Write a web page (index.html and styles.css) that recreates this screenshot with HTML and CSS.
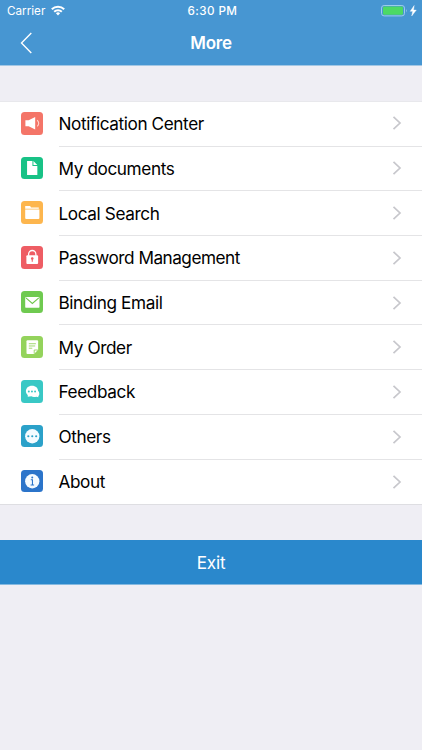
FILE: index.html
```html
<!DOCTYPE html>
<html lang="en">
<head>
<meta charset="utf-8">
<title>More</title>
<link rel="stylesheet" href="styles.css">
</head>
<body>
<header class="header">
  <div class="status">
    <div class="carrier"><span>Carrier</span>
      <svg width="14" height="11" viewBox="0 0 14 11" fill="none" stroke="#fff" stroke-width="2"><path d="M.8 4.2a8.8 8.8 0 0 1 12.4 0M3.2 6.8a5.4 5.4 0 0 1 7.6 0"/><path d="M4.9 8.3a3 3 0 0 1 4.2 0L7 10.5z" fill="#fff" stroke="none"/></svg>
    </div>
    <span class="time">6:30 PM</span>
    <div class="power">
      <svg width="36" height="12" viewBox="0 0 36 12"><rect x=".5" y=".5" width="23" height="10.4" rx="2.6" fill="none" stroke="#9dccec"/><rect x="2" y="1.6" width="20" height="8.2" rx="1.3" fill="#4cd964"/><path d="M25 4q1.5 1.6 0 3.4z" fill="#9dccec"/><path d="M33.2.5l-4 5.8h2.5l-1 4.7 4.6-5.9h-2.8z" fill="#fff" stroke="#fff" stroke-width=".4"/></svg>
    </div>
  </div>
  <div class="nav">
    <svg class="back" width="14" height="24" viewBox="0 0 14 24" fill="none" stroke="#fff" stroke-width="1.4"><path d="M11.3 2L1.5 12l9.8 10"/></svg>
    <h1 class="title">More</h1>
  </div>
</header>
<main>
  <ul class="list">
    <li class="row"><svg class="icon coral" viewBox="0 0 23 23"><path d="M4.5 8.5h3.3L14.5 5v13l-6.7-3.5H4.5z" fill="#fff"/><path d="M16.5 8.2q3.2 3.3 0 6.6" fill="none" stroke="#ffd5cf" stroke-width="1.1"/></svg><div class="cell"><span class="label">Notification Center</span><svg class="chevron" viewBox="0 0 10 16"><path d="M1.5 1.8L8 8l-6.5 6.2"/></svg></div></li>
    <li class="row"><svg class="icon emerald" viewBox="0 0 23 23"><path d="M6.2 4.2h5.5v5h5v9.3H6.2zM12.7 4.2l4 4h-4z" fill="#fff"/></svg><div class="cell"><span class="label">My documents</span><svg class="chevron" viewBox="0 0 10 16"><path d="M1.5 1.8L8 8l-6.5 6.2"/></svg></div></li>
    <li class="row"><svg class="icon amber" viewBox="0 0 23 23"><path d="M4.3 5.2h5l1 1.4h7.9v1.3H4.3zM4.3 8.7h14.5v8.7a1 1 0 0 1-1 1H5.3a1 1 0 0 1-1-1z" fill="#fff"/></svg><div class="cell"><span class="label">Local Search</span><svg class="chevron" viewBox="0 0 10 16"><path d="M1.5 1.8L8 8l-6.5 6.2"/></svg></div></li>
    <li class="row"><svg class="icon red" viewBox="0 0 23 23"><path d="M7.8 10V8.3a3.7 3.7 0 0 1 7.4 0V10" fill="none" stroke="#fff" stroke-width="1.3"/><rect x="5.5" y="9.5" width="12" height="9" rx="1" fill="#fff"/><path d="M11.5 12v4" stroke="#ee5d64" stroke-width="1.1"/><circle cx="11.5" cy="12.7" r="1.3" fill="#ee5d64"/></svg><div class="cell"><span class="label long">Password Management</span><svg class="chevron" viewBox="0 0 10 16"><path d="M1.5 1.8L8 8l-6.5 6.2"/></svg></div></li>
    <li class="row"><svg class="icon green" viewBox="0 0 23 23"><rect x="4.3" y="6.2" width="14.6" height="11" rx="1.2" fill="#fff"/><path d="M5 7l6.6 5.8L18.2 7" fill="none" stroke="#6fc64c" stroke-width="1.1"/></svg><div class="cell"><span class="label">Binding Email</span><svg class="chevron" viewBox="0 0 10 16"><path d="M1.5 1.8L8 8l-6.5 6.2"/></svg></div></li>
    <li class="row"><svg class="icon lime" viewBox="0 0 23 23"><path d="M6.6 4.300h9.900q1 0 1 1v8.700l-4.200 4.500H6.600q-1 0-1-1V5.300q0-1 1-1z" fill="#fff"/><path d="M8 7.900h7.200M8 10.200h6.500M8 12.500h3.500M13.500 18v-3.700h3.700" fill="none" stroke="#94d35c" stroke-width=".9"/></svg><div class="cell"><span class="label">My Order</span><svg class="chevron" viewBox="0 0 10 16"><path d="M1.5 1.8L8 8l-6.5 6.2"/></svg></div></li>
    <li class="row"><svg class="icon turquoise" viewBox="0 0 23 23"><path d="M11.2 5.8c4 0 6.2 2.5 6.2 5.2q1.3.9 1.3 3c0 1.2-.5 2-1 2.5v1.2l-2-.7c-2 .6-4 .5-5-.3l-3.8.5v-1.8C5.7 14.2 5 13 5 11.5c0-3.2 2.500-5.700 6.200-5.700z" fill="#fff"/><g fill="#39c8c5"><circle cx="8" cy="11.7" r="1"/><circle cx="11.2" cy="11.7" r="1"/><circle cx="14.4" cy="11.7" r="1"/></g></svg><div class="cell"><span class="label">Feedback</span><svg class="chevron" viewBox="0 0 10 16"><path d="M1.5 1.8L8 8l-6.5 6.2"/></svg></div></li>
    <li class="row"><svg class="icon teal" viewBox="0 0 23 23"><circle cx="11.5" cy="11.5" r="7.3" fill="#f4fbff"/><g fill="#2ba1c9"><circle cx="7.5" cy="11.5" r="1.1"/><circle cx="11.5" cy="11.5" r="1.1"/><circle cx="15.5" cy="11.5" r="1.1"/></g></svg><div class="cell"><span class="label">Others</span><svg class="chevron" viewBox="0 0 10 16"><path d="M1.5 1.8L8 8l-6.5 6.2"/></svg></div></li>
    <li class="row"><svg class="icon blue" viewBox="0 0 23 23"><circle cx="11.5" cy="11.5" r="7.3" fill="#f4faff"/><circle cx="11.5" cy="7.7" r="1" fill="#2b74ca"/><path d="M10 10h1.7v5.3M9.8 15.3h3.6" fill="none" stroke="#2b74ca" stroke-width="1.1"/></svg><div class="cell"><span class="label">About</span><svg class="chevron" viewBox="0 0 10 16"><path d="M1.5 1.8L8 8l-6.5 6.2"/></svg></div></li>
  </ul>
  <button class="exit">Exit</button>
</main>
</body>
</html>
```
FILE: styles.css
```css
* { box-sizing: border-box; }
body {
  margin: 0;
  min-height: 750px;
  background: #efeef4;
  color: #000;
  font-family: Inter, "Liberation Sans", sans-serif;
}
.header {
  height: 66px;
  background: #4796d2;
  border-bottom: 1px solid #a3c7e4;
  color: #fff;
}
.status {
  display: grid;
  grid-template-columns: 1fr auto 1fr;
  align-items: center;
  height: 21px;
  padding: 0 5px 0 7px;
  font-size: 11.7px;
}
.carrier { display: flex; align-items: center; gap: 6px; }
.time { font-weight: 500; letter-spacing: .4px; margin-left: 1px; }
.power { display: flex; justify-content: flex-end; }
.nav {
  display: grid;
  grid-template-columns: 1fr auto 1fr;
  align-items: center;
  height: 43px;
}
.back { margin-left: 20px; }
.title { margin: 0; font-size: 17px; font-weight: 600; letter-spacing: -.2px; }
.list {
  margin: 35px 0 0;
  padding: 0;
  list-style: none;
  background: #fff;
  border-top: 1px solid #e8e8ec;
  border-bottom: 1px solid #dedee2;
}
.row { display: flex; align-items: center; height: 44.7px; padding-left: 20.5px; }
.row:last-child { height: 44.4px; }
.icon { width: 22.5px; height: 22.5px; margin: 0 15.5px 2px 0; border-radius: 3.5px; flex: none; }
.row:last-child .icon { margin-bottom: 1px; }
.cell {
  display: flex;
  flex: 1;
  align-items: center;
  justify-content: space-between;
  height: 100%;
  padding-right: 20px;
  border-bottom: 1px solid #e4e4e6;
}
.row:last-child .cell { border-bottom: 0; }
.label { font-size: 17.2px; letter-spacing: -.4px; }
.long { letter-spacing: -.5px; }
.chevron { width: 10px; height: 16px; fill: none; stroke: #c7c7cc; stroke-width: 1.7; }
.row:nth-child(-n+2) .cell { padding-bottom: 1px; }
.coral { background: #f47568; }
.emerald { background: #18c286; }
.amber { background: #fdb64e; }
.red { background: #ee5d64; }
.green { background: #6fca50; }
.lime { background: #94d35c; }
.turquoise { background: #39c8c5; }
.teal { background: #2ba1c9; }
.blue { background: #2b74ca; }
.exit {
  display: block;
  width: 100%;
  height: 45px;
  margin-top: 35px;
  padding: 1px 0 0;
  border: 0;
  border-bottom: 1px solid #85b9e0;
  background: #2a88cc;
  color: #fff;
  font: 400 17.2px Inter, "Liberation Sans", sans-serif;
  letter-spacing: -.2px;
}
```
